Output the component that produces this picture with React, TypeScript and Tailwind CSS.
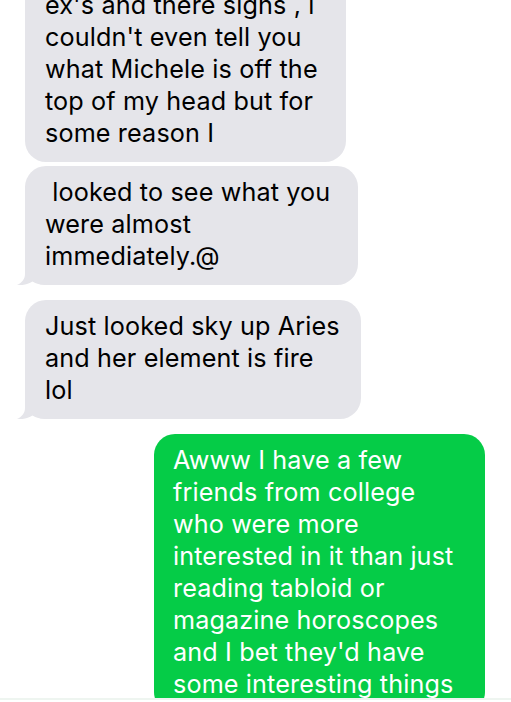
import React from 'react';

type Msg = { id: number; from: 'them' | 'me'; lines: string[]; width: number; tail?: boolean; gap: number };

const messages: Msg[] = [
  {
    id: 1,
    from: 'them',
    lines: ["ex's and there signs , i", "couldn't even tell you", 'what Michele is off the', 'top of my head but for', 'some reason I'],
    width: 321,
    gap: 0,
  },
  {
    id: 2,
    from: 'them',
    lines: ['\u00a0looked to see what you', 'were almost', 'immediately.@'],
    width: 333,
    tail: true,
    gap: 4,
  },
  {
    id: 3,
    from: 'them',
    lines: ['Just looked sky up Aries', 'and her element is fire', 'lol'],
    width: 336,
    tail: true,
    gap: 15,
  },
  {
    id: 4,
    from: 'me',
    lines: [
      'Awww I have a few',
      'friends from college',
      'who were more',
      'interested in it than just',
      'reading tabloid or',
      'magazine horoscopes',
      "and I bet they'd have",
      'some interesting things',
    ],
    width: 331,
    gap: 15,
  },
];

function Tail() {
  return (
    <svg className="absolute left-[-8px] bottom-0" width="30" height="24" viewBox="0 0 30 24">
      <path d="M8 0 V13 C8 18.5 4.5 22 0 24 C5.5 24.6 11 23.4 15.5 20.6 C19 22.8 23 24 30 24 V0 Z" fill="#e5e5ea" />
    </svg>
  );
}

function Bubble({ msg }: { msg: Msg }) {
  const mine = msg.from === 'me';
  return (
    <div
      className={`relative rounded-[21px] pt-[10px] pb-[13px] ${mine ? 'self-end bg-[#05cc47] text-white pl-[19px]' : 'self-start bg-[#e5e5ea] text-black pl-[20px]'}`}
      style={{ width: msg.width, marginTop: msg.gap }}
    >
      {msg.tail && <Tail />}
      <p className="relative text-[25.2px] leading-[32px] tracking-[0.005em] whitespace-nowrap">
        {msg.lines.map((l, i) => (
          <span key={i} className="block">{l}</span>
        ))}
      </p>
    </div>
  );
}

export default function App() {
  return (
    <div className="h-[702px] w-[511px] bg-white flex flex-col overflow-hidden" style={{ fontFamily: 'Inter, "Liberation Sans", sans-serif' }}>
      <div className="flex-1 min-h-0 overflow-hidden">
        <div className="flex flex-col pl-[25px] pr-[26px] mt-[-21px]">
          {messages.map((m) => (
            <Bubble key={m.id} msg={m} />
          ))}
        </div>
      </div>
      <div className="h-[4px] shrink-0 bg-white border-t-2 border-[#eef5f0]" />
    </div>
  );
}
